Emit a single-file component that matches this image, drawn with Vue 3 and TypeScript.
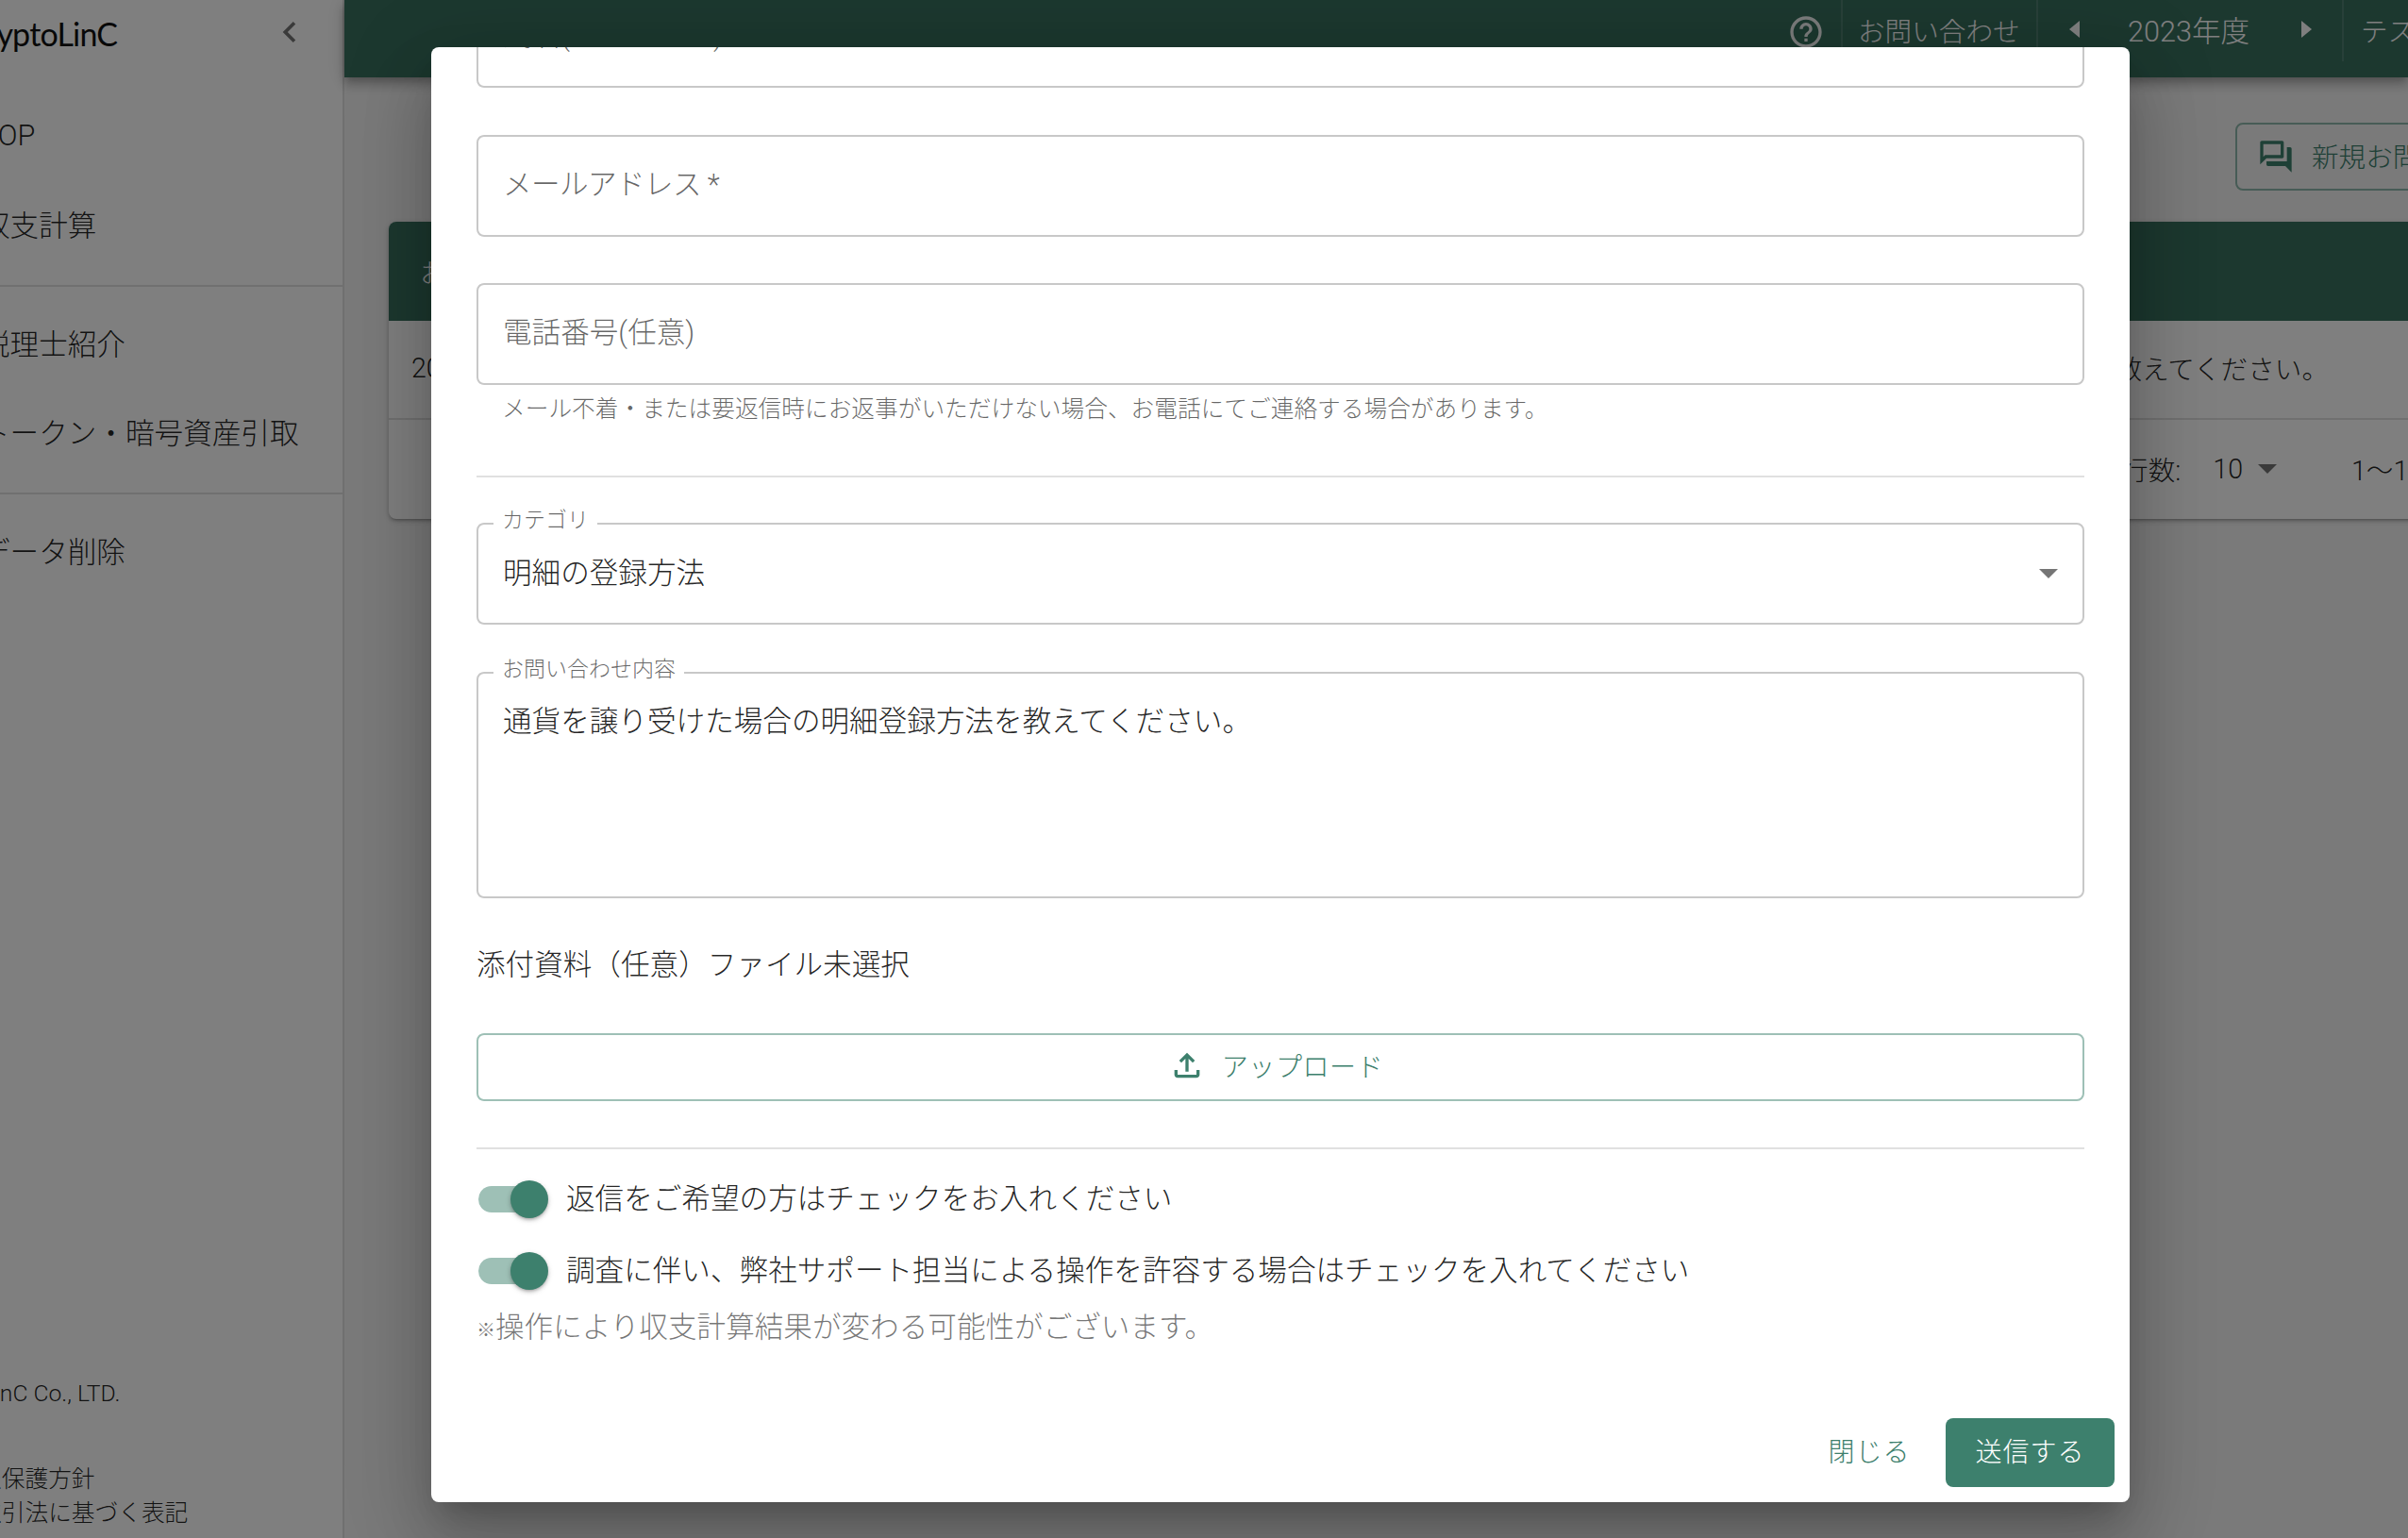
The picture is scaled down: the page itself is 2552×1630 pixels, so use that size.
<script setup lang="ts">
const firstNav: string[] = ['TOP', '収支計算']
const secondNav: string[] = ['税理士紹介', 'トークン・暗号資産引取']
const thirdNav: string[] = ['データ削除']
const switches: string[] = [
  '返信をご希望の方はチェックをお入れください',
  '調査に伴い、弊社サポート担当による操作を許容する場合はチェックを入れてください',
]
</script>

<template>
  <div class="page">
    <aside class="sidebar">
      <div class="logo-row">
        <span class="logo">CryptoLinC</span>
        <svg class="chevron" viewBox="0 0 24 24"><path d="M15.41 7.41 14 6l-6 6 6 6 1.41-1.41L10.83 12z" /></svg>
      </div>
      <ul class="nav first">
        <li v-for="n in firstNav" :key="n">{{ n }}</li>
      </ul>
      <ul class="nav">
        <li v-for="n in secondNav" :key="n">{{ n }}</li>
      </ul>
      <ul class="nav last">
        <li v-for="n in thirdNav" :key="n">{{ n }}</li>
      </ul>
      <div class="side-foot">
        <p class="copy">© CryptoLinC Co., LTD.</p>
        <p class="legal">個人情報保護方針</p>
        <p class="legal">特定商取引法に基づく表記</p>
      </div>
    </aside>

    <div class="main">
      <header class="topbar">
        <svg class="help" viewBox="0 0 24 24"><path d="M11 18h2v-2h-2v2zm1-16C6.48 2 2 6.48 2 12s4.48 10 10 10 10-4.48 10-10S17.52 2 12 2zm0 18c-4.41 0-8-3.59-8-8s3.59-8 8-8 8 3.59 8 8-3.59 8-8 8zm0-14c-2.21 0-4 1.79-4 4h2c0-1.1.9-2 2-2s2 .9 2 2c0 2-3 1.75-3 5h2c0-2.25 3-2.5 3-5 0-2.21-1.79-4-4-4z" /></svg>
        <div class="tb-item contact">お問い合わせ</div>
        <div class="tb-item year">
          <svg class="tri" viewBox="0 0 11 18"><polygon points="11,0 11,18 0,9" /></svg>
          <span class="year-label">2023年度</span>
          <svg class="tri" viewBox="0 0 11 18"><polygon points="0,0 0,18 11,9" /></svg>
        </div>
        <div class="tb-item user">テスト ユーザー</div>
      </header>

      <div class="content">
        <div class="toolbar">
          <button class="new-btn" type="button">
            <svg class="new-icon" viewBox="0 0 24 24"><path d="M15 4v7H5.17L4 12.17V4h11m1-2H3c-.55 0-1 .45-1 1v14l4-4h10c.55 0 1-.45 1-1V3c0-.55-.45-1-1-1zm5 4h-2v9H6v2c0 .55.45 1 1 1h11l4 4V7c0-.55-.45-1-1-1z" /></svg>
            <span class="new-label">新規お問合せ</span>
          </button>
        </div>
        <section class="card">
          <div class="card-head">お問い合わせ一覧</div>
          <div class="card-row">
            <span>2023/06/01</span>
            <span class="row-msg">通貨を譲り受けた場合の明細登録方法を教えてください。</span>
          </div>
          <div class="card-foot">
            <span>表示行数:</span>
            <span class="rows-val">10</span>
            <svg class="caret dim" viewBox="0 0 20 10"><polygon points="0,0 20,0 10,10" /></svg>
            <span class="range">1〜1 / 1件</span>
          </div>
        </section>
      </div>
    </div>

    <div class="overlay"></div>

    <div class="modal">
      <div class="modal-body">
        <div class="field field-cut"><span class="ph">氏名(フルネーム) *</span></div>
        <div class="field gap-50"><span class="ph ph-mail">メールアドレス *</span></div>
        <div class="field gap-49"><span class="ph">電話番号(任意)</span></div>
        <p class="helper">メール不着・または要返信時にお返事がいただけない場合、お電話にてご連絡する場合があります。</p>
        <hr class="rule rule-a" />
        <div class="field select">
          <span class="float-label">カテゴリ</span>
          <span class="value">明細の登録方法</span>
          <svg class="caret sel-caret" viewBox="0 0 20 10"><polygon points="0,0 20,0 10,10" /></svg>
        </div>
        <div class="field area">
          <span class="float-label">お問い合わせ内容</span>
          <span class="value">通貨を譲り受けた場合の明細登録方法を教えてください。</span>
        </div>
        <p class="attach">添付資料（任意）ファイル未選択</p>
        <button class="upload" type="button">
          <svg class="upload-icon" viewBox="0 0 24 24"><path d="M18 15v3H6v-3H4v3c0 1.1.9 2 2 2h12c1.1 0 2-.9 2-2v-3h-2zM7 9l1.41 1.41L11 7.83V16h2V7.83l2.59 2.58L17 9l-5-5-5 5z" /></svg>
          アップロード
        </button>
        <hr class="rule rule-b" />
        <div v-for="s in switches" :key="s" class="switch-row">
          <span class="switch"><span class="track"></span><span class="thumb"></span></span>
          <span class="switch-label">{{ s }}</span>
        </div>
        <p class="note"><span class="kome">※</span>操作により収支計算結果が変わる可能性がございます。</p>
      </div>
      <div class="actions">
        <button class="btn-close" type="button">閉じる</button>
        <button class="btn-send" type="button">送信する</button>
      </div>
    </div>
  </div>
</template>

<style>
html, body { margin: 0; padding: 0; }
</style>

<style scoped>
* { box-sizing: border-box; }
p, ul { margin: 0; padding: 0; list-style: none; }
.page {
  position: relative;
  display: flex;
  width: 2552px;
  height: 1630px;
  overflow: hidden;
  font-family: Roboto, "Noto Sans CJK JP", sans-serif;
  font-weight: 300;
  color: rgba(0, 0, 0, .87);
  background: #f5f5f5;
}
.sidebar {
  flex: 0 0 365px;
  display: flex;
  flex-direction: column;
  height: 100%;
  background: #fff;
  border-right: 2px solid rgba(0, 0, 0, .12);
  overflow: hidden;
}
.logo-row { flex: 0 0 82px; display: flex; align-items: center; justify-content: space-between; padding-right: 40px; }
.logo { font-family: Lato, sans-serif; font-weight: 400; font-size: 34px; letter-spacing: -.8px; margin-left: -37px; white-space: nowrap; color: #111; margin-top: -12px; }
.chevron { width: 44px; height: 44px; fill: rgba(0, 0, 0, .54); margin-top: -14px; margin-right: -6px; }
.nav { padding: 14px 0 16px; border-bottom: 2px solid rgba(0, 0, 0, .12); }
.nav.first { padding-top: 16px; }
.nav.last { border-bottom: 0; }
.nav li { height: 94px; display: flex; align-items: center; font-size: 30.6px; margin-left: -20px; padding-bottom: 4px; white-space: nowrap; }
.side-foot { margin-top: auto; padding-bottom: 8px; font-size: 24.7px; white-space: nowrap; }
.copy { line-height: 36px; margin: 0 0 55px -116px; }
.legal { line-height: 36px; margin-left: -97px; }

.main { flex: 1; min-width: 0; display: flex; flex-direction: column; }
.topbar {
  flex: 0 0 82px;
  display: flex;
  align-items: flex-start;
  justify-content: flex-end;
  background: #38705f;
  color: #fff;
  box-shadow: 0 4px 8px -2px rgba(0,0,0,.2), 0 8px 10px 1px rgba(0,0,0,.14), 0 2px 20px 1px rgba(0,0,0,.12);
  position: relative;
  white-space: nowrap;
}
.help { width: 40px; height: 40px; fill: #fff; margin: 14px 17px 0 0; opacity: .95; }
.tb-item { height: 65px; display: flex; align-items: center; font-size: 28.6px; border-left: 2px solid rgba(255, 255, 255, .12); padding-bottom: 3px; }
.contact { width: 207px; padding-left: 16px; }
.year { width: 324px; padding-left: 33px; }
.tri { width: 11px; height: 18px; fill: #fff; flex: none; }
.year-label { width: 235px; padding-left: 51px; font-size: 30.6px; }
.user { width: 70px; padding-left: 18px; overflow: hidden; }

.content { flex: 1; padding: 48px 0 0 47px; }
.toolbar { display: flex; justify-content: flex-end; margin-right: -60px; }
.new-btn {
  width: 243px;
  height: 72px;
  display: flex;
  align-items: center;
  gap: 18px;
  padding: 0 0 0 21px;
  border: 2px solid #8fb8ac;
  border-radius: 8px;
  background: transparent;
  color: #3d806d;
  font: inherit;
  font-size: 28.6px;
  white-space: nowrap;
  overflow: hidden;
}
.new-label { margin-bottom: 3px; }
.new-icon { width: 40px; height: 40px; fill: #3d806d; flex: none; }
.card {
  margin: 33px -50px 0 0;
  background: #fff;
  border-radius: 8px;
  box-shadow: 0 3px 3px -2px rgba(0,0,0,.2), 0 2px 4px 0 rgba(0,0,0,.14), 0 2px 8px 0 rgba(0,0,0,.12);
  font-size: 28.6px;
  overflow: hidden;
  white-space: nowrap;
}
.card-head { height: 105px; display: flex; align-items: center; padding-left: 33px; background: #38705f; color: #fff; }
.card-row { height: 105px; display: flex; align-items: center; justify-content: space-between; padding: 0 134px 4px 24px; border-bottom: 2px solid rgba(0,0,0,.12); }
.card-foot { height: 105px; display: flex; align-items: center; justify-content: flex-end; padding-bottom: 2px; }
.rows-val { margin-left: 34px; }
.caret { width: 20px; height: 10px; }
.caret.dim { fill: rgba(0,0,0,.54); margin-left: 16px; margin-right: 79px; }
.range { width: 110px; overflow: hidden; }

.overlay { position: absolute; inset: 0; background: rgba(0, 0, 0, .5); }
.modal {
  position: absolute;
  left: 457px;
  top: 50px;
  width: 1800px;
  height: 1542px;
  display: flex;
  flex-direction: column;
  background: #fff;
  border-radius: 8px;
  box-shadow: 0 21px 29px -13px rgba(0,0,0,.2), 0 46px 73px 6px rgba(0,0,0,.14), 0 17px 88px 15px rgba(0,0,0,.12);
  overflow: hidden;
}
.modal-body { flex: 1; min-height: 0; padding: 0 48px; overflow: hidden; }
.field {
  position: relative;
  height: 108px;
  display: flex;
  align-items: center;
  padding: 0 26px;
  border: 2px solid #c8c8c8;
  border-radius: 8px;
  font-size: 30.6px;
}
.field-cut { margin-top: -65px; }
.gap-50 { margin-top: 50px; }
.gap-49 { margin-top: 49px; }
.ph { color: rgba(0, 0, 0, .6); margin-bottom: 9px; }
.ph-mail { letter-spacing: -.6px; }
.helper { margin: 8px 0 0 27px; font-size: 24.7px; line-height: 36px; color: rgba(0, 0, 0, .6); }
.rule { margin: 0; border: 0; height: 2px; background: #e0e0e0; }
.rule-a { margin-top: 52px; }
.select { margin-top: 48px; justify-content: space-between; }
.value { color: rgba(0, 0, 0, .87); line-height: 44px; }
.float-label {
  position: absolute;
  left: 16px;
  top: -19px;
  padding: 0 9px;
  background: #fff;
  font-size: 23px;
  line-height: 30px;
  color: rgba(0, 0, 0, .6);
}
.sel-caret { fill: rgba(0,0,0,.54); margin-right: 0; }
.area { margin-top: 50px; height: 240px; align-items: flex-start; padding-top: 29px; }
.attach { margin-top: 49px; font-size: 30.6px; line-height: 44px; }
.upload {
  width: 100%;
  height: 72px;
  margin-top: 50px;
  display: flex;
  align-items: center;
  justify-content: center;
  gap: 17px;
  padding: 0 10px 5px 0;
  border: 2px solid #9ec0b6;
  border-radius: 8px;
  background: #fff;
  color: #3d806d;
  font: inherit;
  font-size: 28px;
  letter-spacing: .6px;
}
.upload-icon { width: 40px; height: 40px; fill: #3d806d; }
.rule-b { margin-top: 49px; margin-bottom: 15px; }
.switch-row { height: 76px; display: flex; align-items: center; gap: 20px; }
.switch { position: relative; flex: 0 0 75px; height: 40px; }
.track { position: absolute; left: 2px; top: 6px; width: 65px; height: 28px; border-radius: 14px; background: #9ec0b6; }
.thumb { position: absolute; left: 36px; top: 0; width: 40px; height: 40px; border-radius: 50%; background: #3d806d; box-shadow: 0 2px 3px -1px rgba(0,0,0,.2), 0 2px 4px 0 rgba(0,0,0,.14), 0 2px 6px 0 rgba(0,0,0,.12); }
.switch-label { font-size: 30.6px; line-height: 44px; white-space: nowrap; }
.note { font-size: 30.6px; line-height: 44px; color: rgba(0, 0, 0, .54); }
.kome { font-size: 20px; }
.actions { flex: 0 0 89px; display: flex; justify-content: flex-end; align-items: flex-start; padding-right: 16px; gap: 20px; }
.btn-close, .btn-send { height: 73px; border: 0; border-radius: 8px; font: inherit; font-size: 28px; letter-spacing: 1px; padding: 0 0 5px; }
.btn-close { width: 122px; background: transparent; color: #3d806d; }
.btn-send { width: 179px; background: #3d806d; color: #fff; }
</style>
